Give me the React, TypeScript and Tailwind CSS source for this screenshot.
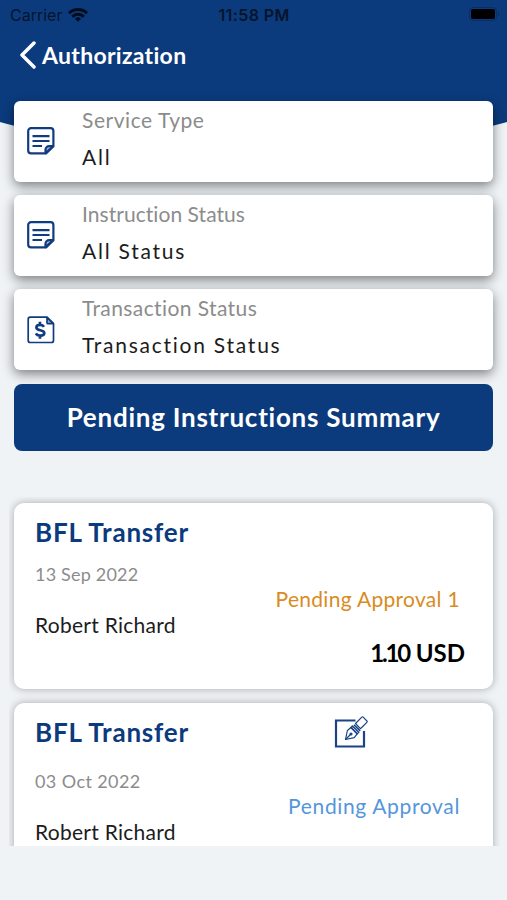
type FilterCardProps = {
  label: string;
  value: string;
  icon: React.ReactNode;
  labelClass: string;
};

function NoteIcon() {
  return (
    <svg
      viewBox="0 0 28 28"
      className="size-7"
      fill="none"
      stroke="#113c7f"
      strokeWidth="2.2"
      strokeLinecap="round"
      strokeLinejoin="round"
    >
      <path d="M4 1.200h19.600a2.800 2.800 0 0 1 2.800 2.800v15.200l-7.300 7.200H4A2.800 2.800 0 0 1 1.200 23.600V4A2.800 2.800 0 0 1 4 1.200z" />
      <path d="M18.500 26v-3.200a3.600 3.600 0 0 1 3.600-3.600h4z" fill="#a9bbd8" />
      <path d="M5.500 9.200h17M5.500 14h17M5.500 19h9.500" strokeLinecap="butt" />
    </svg>
  );
}

function InvoiceIcon() {
  return (
    <svg
      viewBox="0 0 28 28"
      className="size-7"
      fill="none"
      stroke="#113c7f"
      strokeWidth="1.700"
      strokeLinejoin="round"
    >
      <path d="M3.200 1.200H20l6.500 6.500v16.800a2 2 0 0 1-2 2H3.200a2 2 0 0 1-2-2V3.200a2 2 0 0 1 2-2z" />
      <path d="M20 1.500v5.200a1 1 0 0 0 1 1h5.300z" fill="#8ba6cf" />
      <path
        d="M17 10.800c-.7-1.300-2-1.900-3.900-1.900-2.200 0-3.700 1-3.700 2.600 0 3.900 7.900 1.500 7.900 5.500 0 1.700-1.600 2.700-4 2.700-2.100 0-3.600-.8-4.400-2.300M13 5.800v3.300M13 19.500v3.300"
        strokeWidth="2.700"
      />
    </svg>
  );
}

function SignIcon() {
  return (
    <svg viewBox="0 0 36 32" className="h-8 w-9" fill="none" stroke="#1b4484">
      <path d="M21.500 4.500H2v26h28V15" strokeWidth="2.200" />
      <g strokeWidth="1.200" strokeLinejoin="round">
        <path d="M21.500 7.500l6.300-6.300q.7-.7 1.400 0l3.700 3.800q.7.700 0 1.400l-6.500 6.300z" />
        <path d="M11.500 23.500l1.900-9 3.600-3 6.200 6.300-3 3.800z" />
        <path d="M11.500 23.500l5-5" />
        <path d="M17 11.500l1.500-1.500 6.200 6.300-1.500 1.500zM20 8.700l6.200 6.200" strokeWidth="1.500" />
        <circle cx="17" cy="18" r="1" fill="#1b4484" />
      </g>
    </svg>
  );
}

function WifiIcon() {
  return (
    <svg viewBox="0 0 20 14" className="h-3.5 w-5" fill="none" stroke="#020b1c" strokeWidth="2.900">
      <path d="M1 5.200a12.800 12.800 0 0 1 18 0M4.200 8.700a8.200 8.200 0 0 1 11.600 0" />
      <path d="M10 13.800l-3-3.100a4.300 4.300 0 0 1 6 0z" fill="#020b1c" stroke="none" />
    </svg>
  );
}

function StatusBar() {
  return (
    <div className="grid h-[29px] grid-cols-3 items-center pl-2.5 pr-2 font-['Inter'] text-[16px] text-[#06142c]">
      <div className="flex items-center gap-1.5">
        <span>Carrier</span>
        <WifiIcon />
      </div>
      <span className="pr-px text-center font-semibold tracking-[0.400px] whitespace-nowrap">11:58 PM</span>
      <div className="flex items-center justify-end gap-px pb-0.5">
        <div className="rounded-[4px] border border-[#0a2d63] p-px">
          <div className="h-2.5 w-6 rounded-[2px] bg-black" />
        </div>
        <div className="h-1 w-px bg-[#0a2d63]" />
      </div>
    </div>
  );
}

function FilterCard({ label, value, icon, labelClass }: FilterCardProps) {
  return (
    <div className="flex h-[81px] items-center rounded-md bg-white pl-[13px] shadow-[0_4px_12px_rgba(0,0,0,0.48)]">
      {icon}
      <div className="flex h-full flex-col pt-[6px] pl-[27px] whitespace-nowrap">
        <div className="h-[37px] text-[21px] leading-[26px] text-[#8c8c8c]">
          <span className={labelClass}>{label}</span>
        </div>
        <div className="text-[21px] leading-[26px] text-[#1c1c1c]">
          <span className="tracking-[1.750px]">{value}</span>
        </div>
      </div>
    </div>
  );
}

export default function App() {
  return (
    <div className="relative flex h-[900px] w-full flex-col overflow-hidden bg-[#eff3f6] font-['Lato',sans-serif]">
      {/* Curved header backdrop */}
      <div className="absolute top-0 -right-[100px] -left-[100px] h-[151px] rounded-b-[50%_96px] bg-[#0b3b7d]" />

      <div className="relative">
        <StatusBar />
        <div className="flex h-[71px] items-start pt-3 pl-[19px] text-white">
          <svg viewBox="0 0 18 28" className="h-7 w-[18px]" fill="none" stroke="white" strokeWidth="3.500">
            <path d="M15 2L3 14l12 12" strokeLinecap="round" strokeLinejoin="round" />
          </svg>
          <h1 className="-mt-px pl-[5px] text-[23px] leading-[30px] font-bold tracking-[0.300px]">Authorization</h1>
        </div>

        <div className="flex flex-col gap-[13.400px] px-[14px] pt-[0.600px]">
          <FilterCard label="Service Type" value="All" icon={<NoteIcon />} labelClass="tracking-[0.550px]" />
          <FilterCard label="Instruction Status" value="All Status" icon={<NoteIcon />} labelClass="tracking-[0.050px]" />
          <FilterCard
            label="Transaction Status"
            value="Transaction Status"
            icon={<InvoiceIcon />}
            labelClass="tracking-[0.400px]"
          />
          <button className="relative h-[67px] rounded-lg bg-[#0b3b7d] text-[26px] font-bold tracking-[0.750px] whitespace-nowrap text-white">
            Pending Instructions Summary
          </button>
        </div>
      </div>

      {/* Scrolling list, cut off at the bottom */}
      <div className="relative mt-[46px] ml-[9px] flex h-[349px] w-[491px] flex-col gap-[14px] overflow-hidden pt-1.5 pr-[7px] pl-[5px] whitespace-nowrap">
        <div className="h-[186px] shrink-0 rounded-[10px] bg-white pt-[12px] pr-7 pl-[21px] shadow-[0_0_9px_rgba(0,0,0,0.3)]">
          <h2 className="text-[26px] leading-[34px] font-bold tracking-[0.800px] text-[#0b3b7d]">BFL Transfer</h2>
          <div className="pt-[13px] text-[18px] leading-[24px] tracking-[0.200px] text-[#8c8c8c]">13 Sep 2022</div>
          <div className="pr-[5px] text-right text-[21px] leading-[26px] tracking-[0.300px] text-[#d98c1e]">
            Pending Approval 1
          </div>
          <div className="text-[21px] leading-[26px] tracking-[0.270px] text-[#1c1c1c]">Robert Richard</div>
          <div className="text-right text-[24px] leading-[30px] font-bold text-black">
            <span className="tracking-[-2.200px]">1.10</span>
            <span className="pl-px"> USD</span>
          </div>
        </div>

        <div className="h-[186px] shrink-0 rounded-[10px] bg-white pt-[12px] pr-7 pl-[21px] shadow-[0_0_9px_rgba(0,0,0,0.3)]">
          <div className="flex h-[34px] items-center">
            <h2 className="w-[299px] text-[26px] leading-[34px] font-bold tracking-[0.800px] text-[#0b3b7d]">
              BFL Transfer
            </h2>
            <SignIcon />
          </div>
          <div className="pt-5 text-[18px] leading-[24px] tracking-[0.400px] text-[#8c8c8c]">03 Oct 2022</div>
          <div className="pr-[5px] text-right text-[21px] leading-[26px] tracking-[0.650px] text-[#5496dc]">
            Pending Approval
          </div>
          <div className="text-[21px] leading-[26px] tracking-[0.270px] text-[#1c1c1c]">Robert Richard</div>
        </div>
      </div>
    </div>
  );
}
